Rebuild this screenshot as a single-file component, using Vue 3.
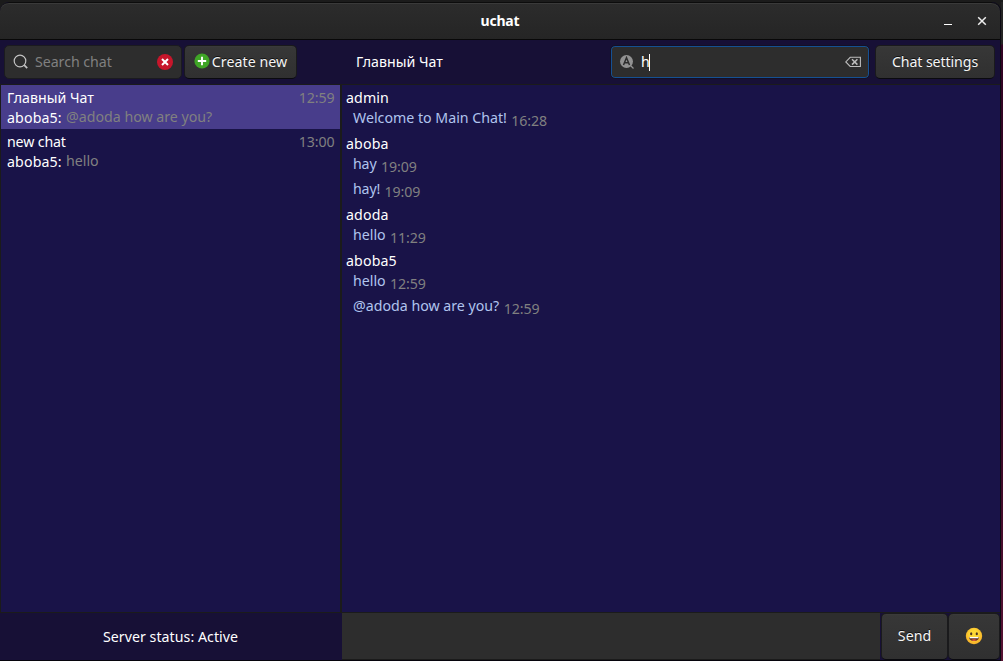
<script setup>
const chats = [
  { name: 'Главный Чат', nameClass: '', time: '12:59', author: 'aboba5:', text: '@adoda how are you?', active: true },
  { name: 'new chat', nameClass: 'snug', time: '13:00', author: 'aboba5:', text: 'hello', active: false },
]
const groups = [
  { author: 'admin', messages: [{ text: 'Welcome to Main Chat!', cls: '', time: '16:28' }] },
  { author: 'aboba', messages: [{ text: 'hay', cls: 'snug', time: '19:09' }, { text: 'hay!', cls: 'snug', time: '19:09' }] },
  { author: 'adoda', messages: [{ text: 'hello', cls: '', time: '11:29' }] },
  { author: 'aboba5', messages: [{ text: 'hello', cls: '', time: '12:59' }, { text: '@adoda how are you?', cls: '', time: '12:59' }] },
]
</script>

<template>
  <div class="desktop">
    <div class="window">
      <header class="titlebar">
        <span class="title">uchat</span>
        <div class="controls">
          <svg width="10" height="12" viewBox="0 0 10 12"><path d="M1 9.5H9" stroke="#fff" /></svg>
          <svg width="10" height="10" viewBox="0 0 10 10"><path d="M1.2 1.2 8.8 8.8M8.8 1.2 1.2 8.8" stroke="#eee" stroke-width="1.5" /></svg>
        </div>
      </header>

      <div class="toolbar">
        <div class="left-tools">
          <div class="field search">
            <svg class="lens" width="16" height="16" viewBox="0 0 16 16" fill="none" stroke="#c3c3c3"><circle cx="7" cy="7" r="5.8" stroke-width="1.2" /><path d="m11.2 11.2 3 3" stroke-width="1.7" /></svg>
            <span class="placeholder">Search chat</span>
            <svg class="clear" width="16" height="16" viewBox="0 0 16 16"><circle cx="8" cy="8" r="8" fill="#c7162b" /><path d="m5 5 6 6m0-6-6 6" stroke="#fff" stroke-width="2" /></svg>
          </div>
          <button class="btn create">
            <svg width="16" height="16" viewBox="0 0 16 16"><circle cx="8" cy="8" r="7.6" fill="#3fa526" /><path d="M8 3.8v8.4M3.8 8h8.4" stroke="#fff" stroke-width="1.9" /></svg>
            <span>Create new</span>
          </button>
        </div>
        <div class="right-tools">
          <span class="chat-title">Главный Чат</span>
          <div class="field find">
            <svg width="16" height="16" viewBox="0 0 16 16"><circle cx="7.5" cy="7.5" r="6.5" fill="#929292" /><path d="m11.5 11.5 3 3" stroke="#929292" stroke-width="1.2" /><path d="M4.5 11 7.5 3.7 10.5 11M5.6 8.7h3.8" fill="none" stroke="#2d2d2d" stroke-width="1.5" /></svg>
            <span class="query">h</span><i class="caret"></i>
            <svg class="erase" width="16" height="12" viewBox="0 0 16 12" fill="none" stroke="#bdbdbd"><path d="M5.2 1.3h10.2v9.2H5.2L.8 5.9Z" stroke-width="1.1" /><path d="m7 3.2 5.4 5.4m0-5.4L7 8.6" stroke-width="1.5" /></svg>
          </div>
          <button class="btn settings"><span>Chat settings</span></button>
        </div>
      </div>

      <main class="content">
        <section class="chats">
          <div v-for="chat in chats" :key="chat.name" class="chat" :class="{ active: chat.active }">
            <div class="line">
              <span :class="chat.nameClass">{{ chat.name }}</span>
              <span class="muted time">{{ chat.time }}</span>
            </div>
            <div class="line">
              <span class="author loose">{{ chat.author }}</span>
              <span class="muted snippet">{{ chat.text }}</span>
            </div>
          </div>
        </section>
        <section class="history">
          <div v-for="(group, i) in groups" :key="i" class="group">
            <div class="sender loose">{{ group.author }}</div>
            <div v-for="(message, j) in group.messages" :key="j" class="message">
              <span class="body" :class="message.cls">{{ message.text }}</span>
              <span class="muted stamp">{{ message.time }}</span>
            </div>
          </div>
        </section>
      </main>

      <footer class="footer">
        <div class="status"><span>Server status: Active</span></div>
        <div class="input"></div>
        <button class="btn send"><span>Send</span></button>
        <button class="btn emoji">
          <svg width="18" height="18" viewBox="0 0 18 18">
            <defs><radialGradient id="face" cy=".4"><stop offset=".5" stop-color="#fdd835" /><stop offset="1" stop-color="#f9b72b" /></radialGradient></defs>
            <circle cx="9" cy="9" r="8.2" fill="url(#face)" />
            <ellipse cx="6.2" cy="6.7" rx="1.1" ry="1.5" fill="#4c3425" /><ellipse cx="11.8" cy="6.7" rx="1.1" ry="1.5" fill="#4c3425" />
            <path d="M4 9.9h10c0 5.4-10 5.4-10 0Z" fill="#5d3325" /><path d="M4.4 10h9.2l-.3 1.3H4.7Z" fill="#fff" /><path d="M6.2 13.1c1.5-1 4.1-1 5.6 0-1.7 1.1-3.9 1.1-5.6 0Z" fill="#ed5a3e" />
          </svg>
        </button>
      </footer>
    </div>
    <div class="edge"></div>
  </div>
</template>

<style>
body { margin: 0; background: #1b1b1b; }
</style>

<style scoped>
* { box-sizing: border-box; }
.desktop { display: flex; width: 1003px; height: 661px; padding-top: 2px; overflow: hidden; background: #1b1b1b; font: 14.2px/20px "Noto Sans", "Open Sans", sans-serif; color: #fff; }
.window { display: flex; flex-direction: column; width: 1001px; height: 659px; border-right: 1px solid #0b0a13; border-bottom: 1px solid #06040c; border-radius: 9px 9px 0 0; background: #171036; overflow: hidden; }
.edge { width: 2px; height: 659px; background: linear-gradient(#242424 42px, #330424 43px, #350522 60%, #571334); }
.titlebar { display: grid; grid-template-columns: 1fr auto 1fr; align-items: center; flex: none; height: 38px; border-top: 1px solid #0c0c0c; border-bottom: 1px solid #080808; box-shadow: inset 0 1px #3a3a3a; background: linear-gradient(#2c2c2c, #252525); border-radius: 9px 9px 0 0; }
.title { grid-column: 2; font-weight: 700; font-size: 14px; letter-spacing: -.2px; }
.controls { display: flex; justify-content: flex-end; align-items: center; gap: 24px; padding-right: 13px; }
.toolbar { display: flex; flex: none; height: 44px; padding-top: 5px; }
.left-tools { display: flex; gap: 2px; width: 341px; padding-left: 4px; }
.right-tools { display: flex; flex: 1; padding: 0 5px 0 15px; }
.field { display: flex; align-items: center; height: 34px; border: 1px solid #1b1b1f; border-radius: 5px; background: #2d2d2d; }
.search { width: 178px; padding: 0 8px; }
.placeholder { margin-left: 6px; color: #808080; letter-spacing: -.05px; }
.clear, .erase { margin-left: auto; }
.btn { display: flex; align-items: center; justify-content: center; height: 34px; padding: 0; border: 1px solid #1a1a1c; border-bottom-color: #0a0a0e; border-radius: 5px; background: linear-gradient(#373737, #303030); color: #f5f5f5; font: inherit; text-shadow: 0 -1px rgba(0, 0, 0, .7); box-shadow: inset 0 1px #3a3a3a; }
.create { width: 113px; gap: 2px; letter-spacing: .04px; }
.create svg { margin-top: -2px; }
.settings { width: 120px; margin-left: 5px; letter-spacing: -.1px; }
.chat-title { line-height: 33px; }
.find { width: 260px; margin-left: auto; padding: 0 8px; border-color: #141024; box-shadow: inset 0 0 0 1px #155093; }
.query { margin-left: 6px; letter-spacing: -.7px; }
.caret { width: 1px; height: 17px; background: #fff; }
.content { display: flex; flex: 1; min-height: 0; border-top: 1px solid #1b1b1b; border-bottom: 1px solid #1b1b1b; }
.chats { width: 342px; border-left: 1px solid #1b1b1b; border-right: 2px solid #1b1b1b; background: #191348; }
.history { flex: 1; padding: 3px 4px; background: #191348; }
.chat { height: 44px; padding: 3px 5.5px 0 6px; }
.active { background: #483d8b; }
.line { display: flex; height: 20px; white-space: nowrap; }
.time { margin-left: auto; letter-spacing: -.1px; }
.loose { letter-spacing: .12px; }
.snug { letter-spacing: -.15px; }
.muted { color: #808080; }
.author { width: 59px; }
.snippet { margin-top: -1px; }
.sender { height: 20px; }
.group { padding-bottom: 1px; }
.message { display: flex; height: 25px; padding-left: 7px; white-space: nowrap; }
.body { color: #b0c4ee; }
.stamp { margin: 3px 0 0 4.4px; letter-spacing: -.1px; }
.footer { display: flex; flex: none; height: 47px; }
.status { display: flex; align-items: center; justify-content: center; width: 341px; letter-spacing: .04px; }
.input { width: 538px; margin-left: 1px; background: #2d2d2d; border-bottom: 1px solid #1b1b1b; }
.footer .btn { height: 47px; padding-bottom: 2px; }
.send { width: 67px; margin-left: 1px; }
.emoji { width: 52px; }
</style>
